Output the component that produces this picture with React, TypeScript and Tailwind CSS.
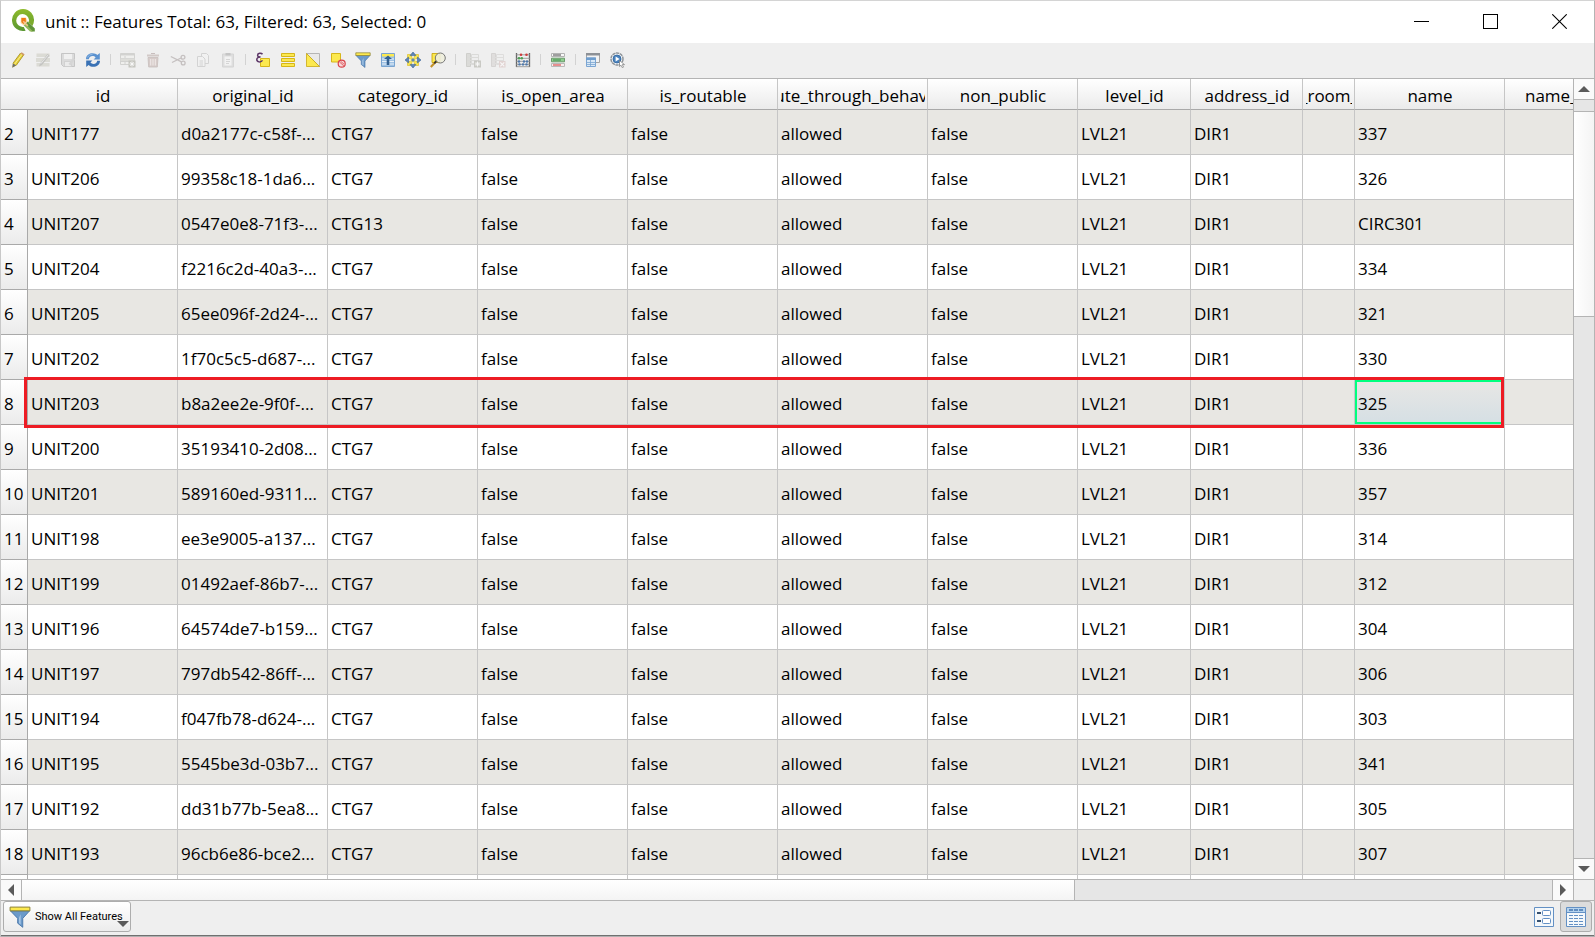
import React from "react";

const rows: string[][] = [
  ["2", "UNIT177", "d0a2177c-c58f-...", "CTG7", "337"],
  ["3", "UNIT206", "99358c18-1da6...", "CTG7", "326"],
  ["4", "UNIT207", "0547e0e8-71f3-...", "CTG13", "CIRC301"],
  ["5", "UNIT204", "f2216c2d-40a3-...", "CTG7", "334"],
  ["6", "UNIT205", "65ee096f-2d24-...", "CTG7", "321"],
  ["7", "UNIT202", "1f70c5c5-d687-...", "CTG7", "330"],
  ["8", "UNIT203", "b8a2ee2e-9f0f-...", "CTG7", "325"],
  ["9", "UNIT200", "35193410-2d08...", "CTG7", "336"],
  ["10", "UNIT201", "589160ed-9311...", "CTG7", "357"],
  ["11", "UNIT198", "ee3e9005-a137...", "CTG7", "314"],
  ["12", "UNIT199", "01492aef-86b7-...", "CTG7", "312"],
  ["13", "UNIT196", "64574de7-b159...", "CTG7", "304"],
  ["14", "UNIT197", "797db542-86ff-...", "CTG7", "306"],
  ["15", "UNIT194", "f047fb78-d624-...", "CTG7", "303"],
  ["16", "UNIT195", "5545be3d-03b7...", "CTG7", "341"],
  ["17", "UNIT192", "dd31b77b-5ea8...", "CTG7", "305"],
  ["18", "UNIT193", "96cb6e86-bce2...", "CTG7", "307"],
  ["", "", "", "", ""],
];

const headers = [
  "id",
  "original_id",
  "category_id",
  "is_open_area",
  "is_routable",
  "route_through_behavior",
  "non_public",
  "level_id",
  "address_id",
  "_room_",
  "name",
];

const yellow = "#fce94f";
const gold = "#c4a000";

function QgisLogo() {
  return (
    <svg viewBox="0 0 24 24" className="size-6 shrink-0" aria-hidden="true">
      <defs>
        <linearGradient id="ring" x1="0" y1="0" x2="0" y2="1">
          <stop offset="0" stopColor="#8fbb2c" />
          <stop offset="1" stopColor="#589632" />
        </linearGradient>
      </defs>
      <path
        d="M14.6 21.700A11 11 0 1 1 22.900 12.500l-4.900-1.500A6.400 6.400 0 1 0 11.600 17.900h1.200z"
        fill="url(#ring)"
      />
      <path d="M22.900 10.500a11 11 0 0 1-1.500 6.600l-3.900-3.900a6.400 6.400 0 0 0 .5-3.200z" fill="#7cab2d" />
      <path d="M12.800 12.800h4.200l6.800 6.800v3h-3.600l-7.400-7z" fill="#5f9337" />
      <path d="M12.800 12.800v3.800l6.200 6h3z" fill="#93b85b" />
      <path d="M10 8.600h5l1.600 4.200-3.800 3.600L9.600 14z" fill="#fbd9a0" />
      <path d="M10.400 9h4.400v3.600l-2.400 2.400-2-2z" fill="#ee7913" />
      <path d="M12.200 12.200l4.600 4.600" stroke="#f6c28b" strokeWidth="1.600" />
    </svg>
  );
}

function FunnelShape() {
  return (
    <>
      <path d="M1 3.500h14l-5 5.500v6.500L6.300 12.500V9z" fill="#6b9ac9" stroke="#3f6fa5" strokeWidth=".6" />
      <path d="M7.300 8.500v4l1.200 1V6z" fill="#a9c7e6" />
      <path d="M.8.800h14.400v2.700H.8z" fill={yellow} stroke="#8a8030" strokeWidth=".7" />
    </>
  );
}

const icons: Record<string, React.ReactNode> = {
  "Toggle editing": (
    <>
      <path d="M3 11.200 10.600 1l3 2L6.200 13.400 2.400 15.600z" fill="#e5cf3a" />
      <path d="M4.600 12.200 12.200 2" stroke="#f8ef92" strokeWidth="1" />
      <path d="M3 11.200 10.600 1M6.200 13.400 13.600 3" stroke="#a08a1d" strokeWidth=".8" />
      <path d="M10.400 1.400 11.600.3l3 2-.9 1.400z" fill="#cf9a68" />
      <path d="M2.900 11.300l3.200 2.200-3.900 2.300z" fill="#6d6d68" />
    </>
  ),
  "Multi edit": (
    <g opacity=".6">
      <path d="M1.500 1.500h13v3.500h-13zM1 6h14v4H1zM1.500 11h13v3.500h-13z" fill="#cfcec4" />
      <path d="M5 11.500 12.500 2l2 1.500L7 13l-3 1.600z" fill="#a9a9a5" />
      <path d="M5.800 11.600 13 3" stroke="#eee" strokeWidth=".8" />
    </g>
  ),
  "Save edits": (
    <g opacity=".5">
      <path d="M1.500 1.500h13v13h-11l-2-2z" fill="#c8c8c8" stroke="#9d9d9d" />
      <path d="M4 2h8v5H4z" fill="#f1f1f1" />
      <path d="M4.500 9.500h7v5h-7z" fill="#e8e8e8" stroke="#a8a8a8" strokeWidth=".7" />
      <path d="M8.500 12 13 6l2 1.400-4.500 6z" fill="#bdbdbd" />
    </g>
  ),
  "Reload table": (
    <>
      <path d="M1 7.200C1 3 4.400 1.200 7.600 1.200c2 0 3.600.7 4.800 1.900L14.800 1v6.400H8.600l2-2C9.800 4.500 8.700 4 7.500 4 5.300 4 4 5.300 3.800 7.200z" fill="#5b92d0" />
      <path d="M15 8.800c0 4.200-3.400 6-6.600 6-2 0-3.600-.7-4.800-1.900L1.200 15V8.600h6.200l-2 2c.8.9 1.900 1.400 3.100 1.400 2.200 0 3.500-1.300 3.700-3.200z" fill="#3a72b5" />
      <path d="M2.600 5.500C3.400 3.300 5.300 2.300 7.600 2.300" stroke="#a8c8ea" strokeWidth=".7" fill="none" />
    </>
  ),
  "Add feature": (
    <g opacity=".55">
      <path d="M.5 1.500h14v11H.5z" fill="#efefec" stroke="#bcbcb8" />
      <path d="M.5 1.500h14v2H.5z" fill="#bcbcb8" />
      <path d="M.5 6.500h14M.5 9.500h9M5 4v8" stroke="#bcbcb8" />
      <path d="M.5 6.500h14v2.500H.5z" fill="#cfcfc8" />
      <path d="M8.500 8.500h7v7h-7z" fill="#a5a59a" />
      <path d="M12 9.500v5M9.500 12h5M10.300 10.300l3.400 3.400M13.700 10.300l-3.400 3.400" stroke="#fff" />
    </g>
  ),
  "Delete selected features": (
    <g opacity=".65">
      <path d="M2 2.500h12v2H2z" fill="#c3b5b2" />
      <path d="M6 1.500h4" stroke="#b4a5a3" />
      <path d="M3 5.500h10l-.7 9.500H3.700z" fill="#c9b9b6" stroke="#b3a4a1" strokeWidth=".8" />
      <path d="M5.700 7v6.500M8 7v6.500M10.300 7v6.500" stroke="#efe5e3" strokeWidth="1.100" />
    </g>
  ),
  "Cut features": (
    <g opacity=".6" fill="none" stroke="#aaa2a2" strokeWidth="1.300">
      <path d="M.8 4.500 11.500 9.800M2 10.500l9-4.500" />
      <circle cx="13" cy="5.200" r="1.900" />
      <circle cx="13.200" cy="11" r="1.900" />
    </g>
  ),
  "Copy features": (
    <g opacity=".6" fill="#f3f3f3" stroke="#c2c2c2">
      <path d="M6.500 1.500h5l2 2v8h-7z" />
      <path d="M2.500 4.500h5l2.500 2.500v7.500H2.500z" />
      <path d="M4.500 9h3.500M4.500 11h3.500M4.500 13h3.500" />
    </g>
  ),
  "Paste features": (
    <g opacity=".6">
      <path d="M2.500 2h11v13h-11z" fill="#d4d4d4" stroke="#c4c4c4" />
      <path d="M4.500 4.500h7v9h-7z" fill="#f5f5f5" />
      <path d="M5.500 1h5v2.500h-5z" fill="#aaa" />
      <path d="M6 7.500h4M6 9.500h4M6 11.500h3" stroke="#c5c5c5" />
    </g>
  ),
  "Select by expression": (
    <>
      <path d="M5.500 6.500h9v8h-9z" fill={yellow} stroke="#d6b61a" />
      <path
        d="M7.500 2.300C6.300.6 2.600.8 2.600 3.200c0 1.300 1.200 1.900 2.900 1.800C3 5 1.800 6.200 1.800 7.600c0 2.800 4.200 3 5.700.8"
        fill="none"
        stroke="#5c3566"
        strokeWidth="1.500"
      />
    </>
  ),
  "Select all": (
    <path d="M1.500 1.500h13v3h-13zM1.500 6.500h13v3h-13zM1.500 11.500h13v3h-13z" fill={yellow} stroke="#d6b61a" />
  ),
  "Invert selection": (
    <>
      <path d="M1.500 1.500h13v13z" fill="#e9e9e9" stroke="#b5b5b5" />
      <path d="M1.500 1.500v13h13z" fill={yellow} stroke={gold} strokeWidth=".7" />
    </>
  ),
  "Deselect all": (
    <>
      <path d="M1.500 1.500h9v8.500h-9z" fill={yellow} stroke="#d6b61a" />
      <circle cx="11.700" cy="11.700" r="3.500" fill="#f8dada" stroke="#d8434a" strokeWidth="1.200" />
      <path d="M9.300 9.800l4.600 4.200M10.600 9.200l3.400 3" stroke="#d8434a" strokeWidth=".8" />
    </>
  ),
  "Filter by form": <FunnelShape />,
  "Move selection to top": (
    <>
      <path d="M1.500 1.500h13v13h-13z" fill="#9fc2e4" stroke="#7aa5d0" />
      <path d="M2 2h12v2.500H2z" fill={yellow} />
      <path d="M2 7h12M2 9.500h12M2 12h12" stroke="#e8f0f8" strokeWidth="1.100" />
      <path d="M8 3.500 12 7H9.300v6H6.700V7H4z" fill="#33608f" />
    </>
  ),
  "Pan map to selection": (
    <>
      <path d="M2.500 2.500h4v4h-4zM9.500 2.500h4v4h-4zM2.500 9.500h4v4h-4zM9.500 9.500h4v4h-4z" fill={yellow} stroke="#d6b61a" strokeWidth=".6" />
      <path d="M5.500 5.500h5v5h-5z" fill={yellow} />
      <path
        d="M8 0l3 3.600H5zM8 16l3-3.600H5zM0 8l3.600-3v6zM16 8l-3.600-3v6z"
        fill="#5f87b8"
        stroke="#3c6798"
        strokeWidth=".6"
      />
      <path d="M6.500 6.500h3v3h-3z" fill="#5f87b8" />
    </>
  ),
  "Zoom map to selection": (
    <>
      <path d="M2 1.500h8v9H2z" fill={yellow} stroke={gold} strokeWidth=".8" />
      <path d="M6 9.500.8 15" stroke="#c4932a" strokeWidth="2.200" />
      <path d="M6.600 8.800 4.300 11.300" stroke="#333" strokeWidth="1.800" />
      <circle cx="10.300" cy="6" r="5" fill="#eeeedd" fillOpacity=".9" stroke="#777" />
    </>
  ),
  "New field": (
    <g opacity=".5">
      <path d="M1.500 1.500h4v13h-4z" fill="#c9c9c2" stroke="#b0b0aa" />
      <path d="M6.500 2.500h7v10h-7z" fill="#eee" stroke="#c6c6c2" />
      <path d="M2 5.500h11M2 8.500h11M2 11.500h7" stroke="#c6c6c2" />
      <path d="M9 8.500h7v7H9z" fill="#a5a59a" />
      <path d="M12.500 9.500v5M10 12h5M10.800 10.300l3.400 3.400M14.200 10.300l-3.400 3.400" stroke="#fff" />
    </g>
  ),
  "Delete field": (
    <g opacity=".5">
      <path d="M1.500 1.500h4v13h-4z" fill="#d2cfcd" stroke="#bcb8b6" />
      <path d="M6.500 2.500h7v10h-7z" fill="#f0efef" stroke="#cfcccb" />
      <path d="M2 5.500h11M2 8.500h11M2 11.500h7" stroke="#cfcccb" />
      <path d="M9 9h6.500v6.500H9z" fill="#d5b9b7" />
      <path d="M10.300 10.300l4 4M14.300 10.300l-4 4" stroke="#fff" strokeWidth="1.200" />
    </g>
  ),
  "Open field calculator": (
    <>
      <path d="M1.500 1v14M14.500 1v14" stroke="#666" strokeWidth="1.300" />
      <path d="M1 2.800h14M1 6.300h14M1 9.300h14M1 12.300h14M1 14.700h14" stroke="#8c8c8c" strokeWidth=".8" />
      <g fill="#cf3b3b">
        <circle cx="6" cy="2.800" r="1.300" />
        <circle cx="11.500" cy="2.800" r="1.300" />
      </g>
      <g fill="#4f9e56">
        <circle cx="4" cy="6.300" r="1.300" />
        <circle cx="6.800" cy="6.300" r="1.300" />
      </g>
      <g fill="#4f79ac">
        <circle cx="4" cy="9.500" r="1.200" />
        <circle cx="9" cy="9.500" r="1.200" />
        <circle cx="12" cy="9.500" r="1.200" />
        <circle cx="4.500" cy="12.400" r="1.200" />
        <circle cx="8" cy="12.400" r="1.200" />
        <circle cx="11.500" cy="12.400" r="1.200" />
      </g>
    </>
  ),
  "Conditional formatting": (
    <>
      <path d="M1.500 1.500h13v3h-13z" fill="#f8f8f8" stroke="#b3b3b3" />
      <path d="M3 3h8" stroke="#444" />
      <path d="M1.500 6.200h13v3.600h-13z" fill="#8fce8f" stroke="#6b9a6b" />
      <path d="M3 8h8" stroke="#3d8a48" />
      <path d="M1.500 11.500h13v3h-13z" fill="#fbeeee" stroke="#b9b9b9" />
      <path d="M3 13h8" stroke="#d03030" />
    </>
  ),
  "Dock attribute table": (
    <>
      <path d="M1.500 1.500h13v9h-13z" fill="#f3f3f3" stroke="#a5a5a5" />
      <path d="M1 1h14v2.500H1z" fill="#8d9196" />
      <path d="M1.500 6h9v8.500h-9z" fill="#d9e8f6" stroke="#7ba5d2" />
      <path d="M1 5.500h10v2.500H1z" fill="#6e9dcd" />
      <path d="M2 10.500h8M2 12.500h8M5.500 8v6" stroke="#7ba5d2" strokeWidth=".8" />
    </>
  ),
  Actions: (
    <>
      <circle cx="7" cy="7" r="6" fill="#eef2f6" stroke="#8f9499" strokeWidth="1.500" strokeDasharray="3.200 .600" />
      <circle cx="7" cy="7" r="4" fill="#4a82bd" stroke="#2f639c" strokeWidth=".8" />
      <path d="M5.600 4.600 9.600 7l-4 2.400z" fill="#fff" />
      <path d="M9.500 8.500v6l1.500-1.300 1.300 2.500 1.200-.6-1.200-2.500h2.200z" fill="#fff" stroke="#777" strokeWidth=".7" />
    </>
  ),
};

const toolbarGroups: string[][] = [
  ["Toggle editing", "Multi edit", "Save edits", "Reload table"],
  ["Add feature", "Delete selected features", "Cut features", "Copy features", "Paste features"],
  [
    "Select by expression",
    "Select all",
    "Invert selection",
    "Deselect all",
    "Filter by form",
    "Move selection to top",
    "Pan map to selection",
    "Zoom map to selection",
  ],
  ["New field", "Delete field", "Open field calculator"],
  ["Conditional formatting"],
  ["Dock attribute table", "Actions"],
];

function TitleBar() {
  return (
    <header className="flex h-[42px] shrink-0 items-center bg-white pb-[2px] pl-[10px]">
      <QgisLogo />
      <h1 className="ml-[10px] flex-1 pt-px text-[17px] leading-6">
        unit :: Features Total: 63, Filtered: 63, Selected: 0
      </h1>
      <div className="flex h-full">
        <button aria-label="Minimize" className="grid w-[69px] place-items-center">
          <svg viewBox="0 0 15 15" className="size-[15px]" shapeRendering="crispEdges">
            <path d="M0 7.500h15" stroke="#000" />
          </svg>
        </button>
        <button aria-label="Maximize" className="grid w-[69px] place-items-center">
          <svg viewBox="0 0 15 15" className="size-[15px]" shapeRendering="crispEdges">
            <path d="M.5.5h14v14H.5z" fill="none" stroke="#000" />
          </svg>
        </button>
        <button aria-label="Close" className="grid w-[69px] place-items-center">
          <svg viewBox="0 0 15 15" className="size-[15px]">
            <path d="M.3.3l14.400 14.400M14.700.3.3 14.700" stroke="#000" strokeWidth="1.100" />
          </svg>
        </button>
      </div>
    </header>
  );
}

function Toolbar() {
  return (
    <div role="toolbar" className="flex h-[35px] shrink-0 items-center bg-[#efefef] pb-[2px] pl-1">
      {toolbarGroups.map((group, g) => (
        <React.Fragment key={g}>
          {g > 0 && (
            <span className="flex w-[10px] justify-center">
              <span className="h-[11px] w-px bg-[#d2d2d2]" />
            </span>
          )}
          {group.map((name) => (
            <button key={name} aria-label={name} className="grid h-[25px] w-[25px] place-items-center">
              <svg viewBox="0 0 16 16" className="size-4" fill="none">
                {icons[name]}
              </svg>
            </button>
          ))}
        </React.Fragment>
      ))}
    </div>
  );
}

function AttributeTable() {
  const th =
    "h-[31px] border-r border-b border-r-[#c6c6c6] border-b-[#a9a9a9] bg-linear-to-b from-white to-[#ebebeb] p-0 pt-[3px] font-normal";
  const td = "h-[45px] border-r border-b border-[#c6c6c6] p-0 pt-[3px] pl-[3px] whitespace-nowrap";
  return (
    <table className="w-full table-fixed border-separate border-spacing-0 text-left text-[17px] leading-6">
      <colgroup>
        <col className="w-[27px]" />
        <col className="w-[150px]" />
        <col className="w-[150px]" />
        <col className="w-[150px]" />
        <col className="w-[150px]" />
        <col className="w-[150px]" />
        <col className="w-[150px]" />
        <col className="w-[150px]" />
        <col className="w-[113px]" />
        <col className="w-[112px]" />
        <col className="w-[52px]" />
        <col className="w-[150px]" />
        <col />
      </colgroup>
      <thead>
        <tr>
          <td className="h-[31px] border-b border-b-[#a9a9a9] bg-linear-to-b from-white to-[#ebebeb] p-0" />
          {headers.map((h) => (
            <th key={h} scope="col" className={th}>
              <div className="mr-[2px] ml-[3px] flex justify-center overflow-hidden whitespace-nowrap">{h}</div>
            </th>
          ))}
          <th
            scope="col"
            className="h-[31px] overflow-hidden border-b border-b-[#a9a9a9] bg-linear-to-b from-white to-[#ebebeb] p-0 pt-[3px] pl-5 font-normal"
          >
            name_
          </th>
        </tr>
      </thead>
      <tbody>
        {rows.map(([num, id, original, category, name], i) => {
          const current = num === "8";
          const cells = num
            ? [id, original, category, "false", "false", "allowed", "false", "LVL21", "DIR1", "", name]
            : Array(11).fill("");
          return (
            <tr key={i} className={i % 2 ? "bg-white" : current ? "relative z-10 bg-[#e8e7e3]" : "bg-[#e8e7e3]"}>
              <th
                scope="row"
                className="h-[45px] border-r border-b border-[#a9a9a9] bg-linear-to-b from-white to-[#ebebeb] p-0 pt-[3px] pl-[3px] font-normal"
              >
                {num}
                {current && (
                  <span className="pointer-events-none absolute -top-[3px] right-[69px] -bottom-[3px] left-[23px] border-3 border-[#ed1c24]" />
                )}
              </th>
              {cells.map((c, j) => (
                <td
                  key={j}
                  className={
                    current && j === 10
                      ? `${td} bg-linear-to-b from-[#e8e7e5] to-[#d5dfe4] shadow-[inset_0_0_0_2px_#00ff7f]`
                      : td
                  }
                >
                  {c}
                </td>
              ))}
              <td className="border-b border-[#c6c6c6] p-0" />
            </tr>
          );
        })}
      </tbody>
    </table>
  );
}

function Arrow({ d, label, className }: { d: string; label: string; className: string }) {
  return (
    <button aria-label={label} className={`grid shrink-0 place-items-center bg-[#fafafa] ${className}`}>
      <svg viewBox="0 0 12 12" className="size-3">
        <path d={d} fill="#5a5a5a" />
      </svg>
    </button>
  );
}

function VerticalScrollbar() {
  return (
    <div className="flex w-[21px] shrink-0 flex-col border-l border-[#b4b4b4] bg-[#e6e6e6]">
      <Arrow label="Scroll up" d="M0 9 6 3l6 6z" className="h-[21px] border-b border-[#b4b4b4]" />
      <div className="h-[11px]" />
      <div className="h-[206px] border-y border-[#b4b4b4] bg-linear-to-r from-white to-[#f4f4f4]" />
      <div className="flex-1" />
      <Arrow label="Scroll down" d="M0 3l6 6 6-6z" className="h-[21px] border-t border-[#b4b4b4]" />
    </div>
  );
}

function HorizontalScrollbar() {
  return (
    <div className="flex h-[22px] shrink-0 border-y border-[#b4b4b4]">
      <div className="flex flex-1 bg-[#e6e6e6]">
        <Arrow label="Scroll left" d="M9 0 3 6l6 6z" className="w-[21px] border-r border-[#b4b4b4]" />
        <div className="w-[67%] border-r border-[#b4b4b4] bg-linear-to-b from-white to-[#f4f4f4]" />
        <div className="flex-1" />
        <Arrow label="Scroll right" d="M3 0l6 6-6 6z" className="w-[21px] border-l border-[#b4b4b4]" />
      </div>
      <div className="w-[21px] border-l border-[#b4b4b4] bg-[#efefef]" />
    </div>
  );
}

function StatusBar() {
  return (
    <footer className="flex h-[35px] shrink-0 items-start border-b border-[#707070] bg-[#efefef] pr-[2px] pl-[2px]">
      <button className="relative flex h-[31px] w-32 items-center rounded-[3px] border border-[#adadad] bg-linear-to-b from-white to-[#ececec] pl-[5px] text-[11px] leading-4">
        <svg viewBox="0 0 16 16" className="size-[22px] shrink-0" fill="none">
          <FunnelShape />
        </svg>
        <span className="ml-1 font-[Roboto,sans-serif] whitespace-nowrap">Show All Features</span>
        <svg viewBox="0 0 12 6" className="absolute right-[1px] bottom-1 h-[6px] w-3">
          <path d="M0 0h12L6 6z" fill="#5a5a5a" />
        </svg>
      </button>
      <div className="ml-auto flex">
        <button aria-label="Switch to form view" className="grid h-[31px] w-8 place-items-center">
          <svg viewBox="0 0 20 20" className="size-5" fill="none">
            <path d="M.5.5h19v19H.5z" fill="#f4f8fb" stroke="#6390c4" />
            <path d="M3 6h4M3 14h4" stroke="#35506f" strokeWidth="2" />
            <rect x="8.500" y="3.500" width="8" height="5" rx="1" fill="#fff" stroke="#6390c4" />
            <rect x="8.500" y="11.500" width="8" height="5" rx="1" fill="#fff" stroke="#6390c4" />
          </svg>
        </button>
        <button
          aria-label="Switch to table view"
          aria-pressed="true"
          className="grid h-[31px] w-8 place-items-center rounded-[3px] border border-[#adadad] bg-[#dcdcdc]"
        >
          <svg viewBox="0 0 20 20" className="size-5" fill="none">
            <path d="M.5.5h19v19H.5z" fill="#f4f8fb" stroke="#6390c4" />
            <path d="M1 1h18v4.500H1z" fill="#b5d3ee" />
            <path d="M3 3h4M8 3h4M13 3h4" stroke="#4577b0" strokeWidth="1.600" />
            <path d="M1 5.500h18" stroke="#6390c4" />
            <path d="M3 8.500h4M8 8.500h4M13 8.500h4M3 11.500h4M8 11.500h4M13 11.500h4M3 14.500h4M8 14.500h4M13 14.500h4M3 17.500h4M8 17.500h4M13 17.500h4" stroke="#6390c4" />
          </svg>
        </button>
      </div>
    </footer>
  );
}

export default function App() {
  return (
    <div className="flex h-screen flex-col overflow-hidden border border-t-[#d4d4d4] border-r-[#b4b4b4] border-b-[#b0b0b0] border-l-[#c8c8c8] bg-white font-['Open_Sans','Noto_Sans',sans-serif] text-black">
      <TitleBar />
      <Toolbar />
      <main className="flex min-h-0 flex-1 border-t border-[#b4b4b4]">
        <div className="min-w-0 flex-1 overflow-hidden">
          <AttributeTable />
        </div>
        <VerticalScrollbar />
      </main>
      <HorizontalScrollbar />
      <StatusBar />
    </div>
  );
}
